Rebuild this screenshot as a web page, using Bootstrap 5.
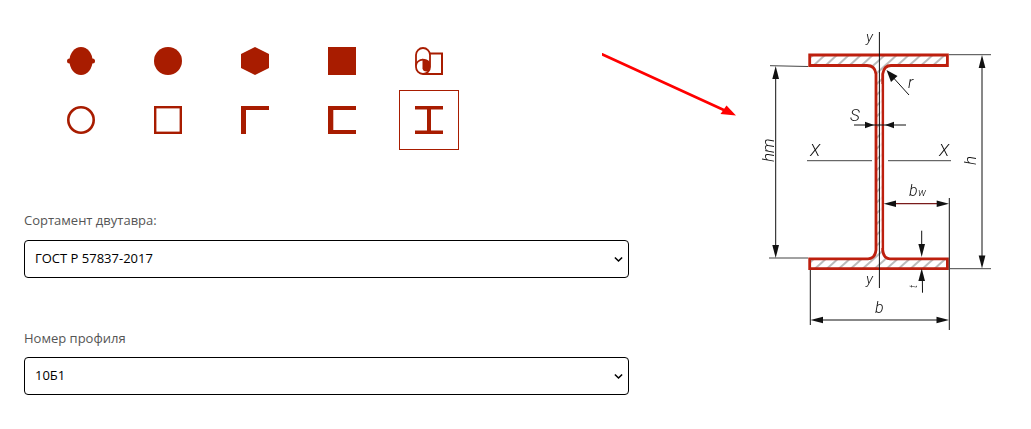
<!DOCTYPE html>
<html lang="ru">
<head>
<meta charset="utf-8">
<title>Двутавр</title>
<link href="https://cdn.jsdelivr.net/npm/bootstrap@5.3.0/dist/css/bootstrap.min.css" rel="stylesheet">
<style>
html,body{height:429px;overflow:hidden;background:#fff}
body{font-family:"Open Sans",sans-serif;font-size:13px;color:#555}
.page-wrap{padding:31px 0 0 24px}
.left-col{width:605px;flex:none}
.shape-grid{display:grid;grid-template-columns:repeat(5,60px);grid-template-rows:59px 60px;column-gap:27px;margin-left:27px;align-items:start}
.shape-cell{width:60px;height:60px;display:flex;align-items:center;justify-content:center;border:1px solid transparent;background:none;padding:0;border-radius:0}
.shape-cell.is-active{border-color:#a81c00}
.shape-cell svg{width:28px;height:28px;display:block;fill:#a81c00}
.field-label{display:block;line-height:20px;color:#555;font-size:13px}
.label-first{margin-top:60px;margin-bottom:10px}
.label-second{margin-top:50px;margin-bottom:9px}
.form-select.profile-select{height:38px;padding:0 24px 0 10px;border:1px solid #000;border-radius:4px;font-family:"Open Sans",sans-serif;font-size:13px;font-weight:500;color:#000;background-image:url("data:image/svg+xml,%3csvg xmlns='http://www.w3.org/2000/svg' viewBox='0 0 10 7'%3e%3cpath fill='none' stroke='%23000' stroke-width='1.7' d='M1 1.2l4 4 4-4'/%3e%3c/svg%3e");background-size:9px 7px;background-position:right 5px center;box-shadow:none}
.diagram{flex:none;width:400px;height:320px;margin-left:-27px;margin-top:-11px;display:block}
.diagram text{font-family:Roboto,"Liberation Sans",sans-serif;font-style:italic;font-weight:300;font-size:15px;fill:#111}
.section-art{filter:blur(.3px)}
.dim{stroke:#111;stroke-width:1;fill:none}
.ext{stroke:#444;stroke-width:1;fill:none}
.outline{stroke:#bd1f0e;stroke-width:2.8;fill:url(#hatch);stroke-linejoin:miter}
.head{fill:#111;stroke:none}
</style>
</head>
<body>
<div class="page-wrap d-flex align-items-start">
  <div class="left-col">
    <div class="shape-grid">
      <button type="button" class="shape-cell" aria-label="Круг с выступами"><svg viewBox="0 0 28 28"><ellipse cx="14" cy="14" rx="11.5" ry="14"/><rect x="0" y="11.5" width="28" height="5" rx="2.5"/></svg></button>
      <button type="button" class="shape-cell" aria-label="Круг"><svg viewBox="0 0 28 28"><circle cx="14" cy="14" r="14"/></svg></button>
      <button type="button" class="shape-cell" aria-label="Шестигранник"><svg viewBox="0 0 28 28"><polygon points="14,0 28,7 28,21 14,28 0,21 0,7"/></svg></button>
      <button type="button" class="shape-cell" aria-label="Квадрат"><svg viewBox="0 0 28 28"><rect width="28" height="28"/></svg></button>
      <button type="button" class="shape-cell" aria-label="Лента"><svg viewBox="0 0 28 28"><path d="M15 6.5H27V27H8" fill="none" stroke="#a81c00" stroke-width="2"/><rect x="1" y="1" width="14" height="26" rx="7" fill="none" stroke="#a81c00" stroke-width="1.8"/><path d="M1 18.5A7.5 6.5 0 0 1 8 12.6" fill="none" stroke="#a81c00" stroke-width="1.8"/><path d="M7.5 11.8C10.5 11.8 13 12.8 15 15V21.2A3.8 3.8 0 0 1 7.5 21.2Z"/></svg></button>
      <button type="button" class="shape-cell" aria-label="Кольцо"><svg viewBox="0 0 28 28"><circle cx="14" cy="14" r="12.7" fill="none" stroke="#a81c00" stroke-width="2.6"/></svg></button>
      <button type="button" class="shape-cell" aria-label="Квадратная труба"><svg viewBox="0 0 28 28"><rect x="1.2" y="1.2" width="25.6" height="25.6" fill="none" stroke="#a81c00" stroke-width="2.4"/></svg></button>
      <button type="button" class="shape-cell" aria-label="Уголок"><svg viewBox="0 0 28 28"><path d="M0 0H28V4H5V28H0Z"/></svg></button>
      <button type="button" class="shape-cell" aria-label="Швеллер"><svg viewBox="0 0 28 28"><path d="M0 0H28V4H5.3V24H28V28H0Z"/></svg></button>
      <button type="button" class="shape-cell is-active" aria-label="Двутавр"><svg viewBox="0 0 28 28"><path d="M0 0H28V3.6H16V24.4H28V28H0V24.4H12V3.6H0Z"/></svg></button>
    </div>
    <label class="field-label label-first" for="sortament">Сортамент двутавра:</label>
    <select id="sortament" class="form-select profile-select"><option>ГОСТ Р 57837-2017</option></select>
    <label class="field-label label-second" for="profile-no">Номер профиля</label>
    <select id="profile-no" class="form-select profile-select"><option>10Б1</option></select>
  </div>
  <svg class="diagram" viewBox="602 20 400 320" role="img" aria-label="Схема двутавра">
    <defs>
      <pattern id="hatch" width="8" height="8" patternUnits="userSpaceOnUse" patternTransform="rotate(48)">
        <rect width="8" height="8" fill="#fff"/><line x1="1" y1="0" x2="1" y2="8" stroke="#aaa" stroke-width="1.6"/>
      </pattern>
    </defs>
    <line x1="602" y1="54.3" x2="726" y2="111" stroke="#f00" stroke-width="2.6" stroke-linecap="round"/>
    <polygon points="736,115.5 720.5,114 726.5,105.5" fill="#f00"/>
    <g class="section-art">
    <path class="outline" d="M809.7 55H947.4V65.5H891Q884 65.5 882.7 74V250Q883.5 258.8 890 258.8H947.4V268.6H809.7V258.8H868Q875 258.8 876 250V74Q875 65.5 867 65.5H809.7Z"/>
    <rect x="880.2" y="84" width="1.3" height="164" fill="#fff"/>
    <line class="dim" x1="879.4" y1="32" x2="879.4" y2="288"/>
    <g class="ext">
      <line x1="770" y1="65.7" x2="808" y2="66.5"/>
      <line x1="769" y1="258" x2="808" y2="258"/>
      <line x1="949" y1="54.7" x2="991" y2="54.7"/>
      <line x1="950" y1="268.7" x2="991" y2="268.7"/>
      <line x1="807" y1="160.7" x2="872" y2="160.7"/>
      <line x1="888" y1="160.7" x2="951" y2="160.7"/>
    </g>
    <g class="dim">
      <line x1="775.7" y1="72" x2="775.7" y2="252"/>
      <line x1="982" y1="60" x2="982" y2="263"/>
      <line x1="810.3" y1="270" x2="810.3" y2="325"/>
      <line x1="949.3" y1="198" x2="949.3" y2="330"/>
      <line x1="816" y1="320" x2="944" y2="320"/>
      <line x1="854" y1="125" x2="906" y2="125"/>
      <line x1="909" y1="95" x2="890" y2="74"/>
      <line x1="921.7" y1="230.7" x2="921.7" y2="250"/>
      <line x1="922.3" y1="276" x2="922.5" y2="292.7"/>
    </g>
    <line x1="890" y1="203.7" x2="944" y2="203.7" stroke="#7a1b1b" stroke-width="1.3"/>
    <g class="head">
      <polygon points="775.7,66 772.3,79 779,79"/>
      <polygon points="775.7,258 772.3,245 779,245"/>
      <polygon points="982,55 978.7,68 985.4,68"/>
      <polygon points="982,268.5 978.7,255.5 985.4,255.5"/>
      <polygon points="810.5,320 823,316.7 823,323.3"/>
      <polygon points="949,320 936.5,316.7 936.5,323.3"/>
      <polygon points="883.7,203.7 896,200.4 896,207"/>
      <polygon points="949,203.7 936.7,200.4 936.7,207"/>
      <polygon points="874,125 865,121.7 865,128.3"/>
      <polygon points="885,125 894,121.7 894,128.3"/>
      <polygon points="886.5,70 897.5,76 891,82"/>
      <polygon points="921.7,257 918.4,244 925,244"/>
      <polygon points="921.7,268.5 918.4,281 925,281"/>
    </g>
    <text x="866" y="42">y</text>
    <text x="866" y="284">y</text>
    <text x="850" y="121" style="font-size:17px">S</text>
    <text x="810" y="156" style="font-size:17px">X</text>
    <text x="939" y="156" style="font-size:17px">X</text>
    <text x="908" y="88" style="font-size:16px">r</text>
    <text transform="translate(774 162) rotate(-90)" style="font-size:17px">hm</text>
    <text transform="translate(976 165) rotate(-90)" style="font-size:17px">h</text>
    <text x="909" y="196" style="font-size:16px">b<tspan style="font-size:11px" dx="0.5">w</tspan></text>
    <text x="875" y="313" style="font-size:16px">b</text>
    <text transform="translate(917 288) rotate(-90)" style="font-size:10px">t</text>
    </g>
  </svg>
</div>
<script src="https://cdn.jsdelivr.net/npm/bootstrap@5.3.0/dist/js/bootstrap.bundle.min.js"></script>
</body>
</html>
